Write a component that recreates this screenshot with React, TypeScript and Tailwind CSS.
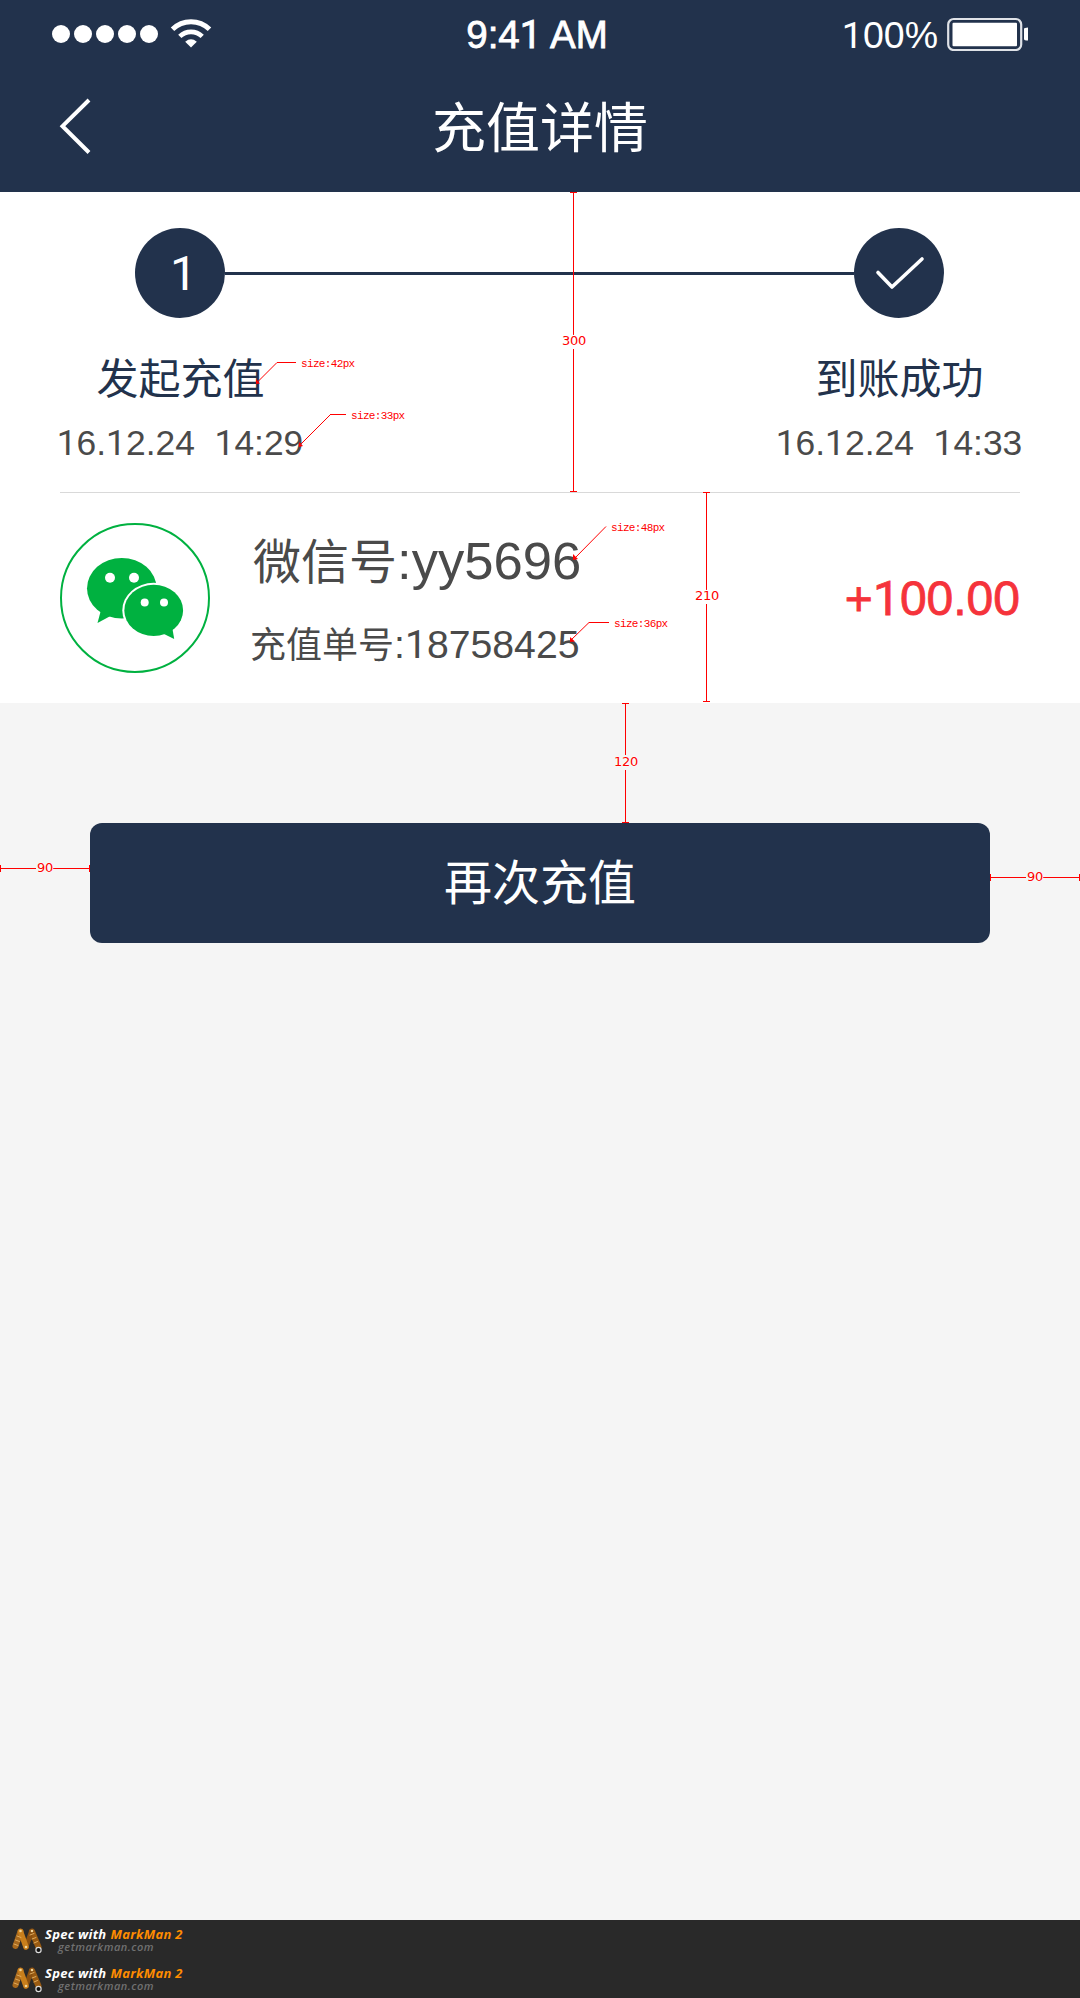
import React from "react";

const CJK = "font-['Liberation_Sans','Noto_Sans_CJK_SC',sans-serif]";

// Figures with a footless "1".
function Figures({ value }: { value: string }) {
  return (
    <>
      {value.split(/(1)/).map((part, i) =>
        part === "1" ? (
          <span key={i} className="font-['Roboto',sans-serif] leading-[0]">1</span>
        ) : (
          part
        )
      )}
    </>
  );
}

function StatusBar() {
  return (
    <div className="flex h-[68px] items-center justify-between pl-[52px] pr-[52px] text-white">
      <div className="flex flex-1 items-center">
        <div className="flex gap-[4.3px]">
          {[0, 1, 2, 3, 4].map((i) => (
            <span key={i} className="size-[17.8px] rounded-full bg-white" />
          ))}
        </div>
        <svg className="ml-[12px]" width="42" height="30" viewBox="0 0 42 30" fill="none">
          <path d="M2.5 10.2 A26.5 26.5 0 0 1 39.5 10.2" stroke="#fff" strokeWidth="5" />
          <path d="M9.8 17.4 A16 16 0 0 1 32.2 17.4" stroke="#fff" strokeWidth="4.6" />
          <path d="M15.2 22.7 Q21 18 26.8 22.7 L21 28.6 Z" fill="#fff" />
        </svg>
      </div>
      <div className="relative -left-[3px] top-px text-[38.5px] leading-[38px] [-webkit-text-stroke:0.8px_white]">
        <Figures value="9:41 AM" />
      </div>
      <div className="flex flex-1 items-center justify-end">
        <span className="relative -left-px top-px text-[37.5px] leading-[38px]">
          <Figures value="100%" />
        </span>
        <svg className="ml-[7px]" width="82" height="34" viewBox="0 0 82 34">
          <rect x="2.2" y="2" width="73" height="31" rx="5.5" fill="none" stroke="#dfe2e7" strokeWidth="2.2" />
          <rect x="6.5" y="5.7" width="64.500" height="23.6" rx="1" fill="#fff" />
          <path d="M78 12 q0-1.5 4-1.5 v13 q-4 0-4-1.5z" fill="#fff" />
        </svg>
      </div>
    </div>
  );
}

function Header() {
  return (
    <header className="h-[192px] bg-[#22324c]">
      <StatusBar />
      <div className="grid h-[118px] grid-cols-[1fr_auto_1fr] items-center px-[58px] text-white">
        <svg className="mb-[2px]" width="34" height="60" viewBox="0 0 34 60" fill="none">
          <path d="M31 4 L4.5 30.2 L31 56.5" stroke="#fff" strokeWidth="4" />
        </svg>
        <h1 className="mt-[3px] text-[54px] leading-[60px] font-normal">充值详情</h1>
      </div>
    </header>
  );
}

function Step({ label, date, children }: { label: string; date: string; children: React.ReactNode }) {
  return (
    <div className="flex w-[250px] flex-col items-center">
      <div className="flex size-[90px] items-center justify-center rounded-full bg-[#22324c] text-[48px] text-white">
        {children}
      </div>
      <div className="ml-px mt-[37px] h-[50px] text-[42px] leading-[50px] text-[#22324c]">{label}</div>
      <div className="mt-[18px] h-[40px] text-[35.4px] leading-[40px] whitespace-pre text-[#4a4a4a]">
        <Figures value={date} />
      </div>
    </div>
  );
}

function Steps() {
  return (
    <section className="flex h-[300px] justify-between pl-[55px] pr-[56px] pt-[36px]">
      <Step label="发起充值" date="16.12.24  14:29">
        <span className="pl-[7px] pt-[2px]">
          <Figures value="1" />
        </span>
      </Step>
      <div className="-mx-[80px] mt-[44px] h-[3px] flex-1 bg-[#22324c]" />
      <Step label="到账成功" date="16.12.24  14:33">
        <svg width="90" height="90" viewBox="0 0 90 90" fill="none">
          <path d="M24 44.5 L38 59 L68 31" stroke="#fff" strokeWidth="3.6" strokeLinecap="round" strokeLinejoin="round" />
        </svg>
      </Step>
    </section>
  );
}

function WechatLogo() {
  return (
    <svg className="shrink-0" width="150" height="150" viewBox="0 0 150 150">
      <circle cx="75" cy="75" r="74" fill="#fff" stroke="#00b140" strokeWidth="2" />
      <ellipse cx="61.8" cy="65.3" rx="34.8" ry="30.3" fill="#00b140" />
      <path d="M41 87 L37.5 100 L50 93.3 Z" fill="#00b140" />
      <circle cx="50" cy="54.8" r="5" fill="#fff" />
      <circle cx="74" cy="54.8" r="5" fill="#fff" />
      <ellipse cx="93.7" cy="87.4" rx="31.4" ry="27.6" fill="#fff" />
      <ellipse cx="93.7" cy="87.4" rx="29.4" ry="25.6" fill="#00b140" />
      <path d="M112.5 106 L114.2 116 L104 111 Z" fill="#00b140" />
      <circle cx="84.7" cy="79.4" r="4" fill="#fff" />
      <circle cx="104" cy="79.4" r="4" fill="#fff" />
    </svg>
  );
}

function Record() {
  return (
    <section className="mx-[60px] flex h-[211px] items-center border-t border-[#d9d9d9] text-[#4a4a4a]">
      <WechatLogo />
      <div className="ml-[40px] flex flex-col">
        <div className="ml-[3px] flex h-[60px] items-baseline text-[48px] leading-[60px]">
          微信号<span className="text-[52.6px]">:yy5696</span>
        </div>
        <div className="mt-[31px] flex h-[43px] items-baseline text-[36px] leading-[46px]">
          充值单号
          <span className="text-[39.2px]">
            <Figures value=":18758425" />
          </span>
        </div>
      </div>
      <div className="ml-auto mt-[2px] text-[48px] leading-[54px] text-[#f5333b] [-webkit-text-stroke:0.8px_#f5333b]">
        <Figures value="+100.00" />
      </div>
    </section>
  );
}

const lengths = [
  { text: "300", pos: "left-[562px] top-[333px]" },
  { text: "210", pos: "left-[695px] top-[588px]" },
  { text: "120", pos: "left-[614px] top-[754px]" },
  { text: "90", pos: "left-[37px] top-[860px]" },
  { text: "90", pos: "left-[1027px] top-[869px]" },
];

const sizes = [
  { text: "size:42px", pos: "left-[301px] top-[357px]" },
  { text: "size:33px", pos: "left-[351px] top-[409px]" },
  { text: "size:48px", pos: "left-[611px] top-[521px]" },
  { text: "size:36px", pos: "left-[614px] top-[617px]" },
];

function Annotations() {
  return (
    <div className="pointer-events-none absolute inset-0 text-[#ff0000]">
      <svg className="absolute inset-0" width="1080" height="1998" viewBox="0 0 1080 1998" fill="none" stroke="#ff0000">
        <g shapeRendering="crispEdges">
          <path d="M570 192.5h7M573.5 192v143M573.5 349v143M570 491.5h7" />
          <path d="M703 492.5h7M706.5 492v98M706.5 604v98M703 701.5h7" />
          <path d="M622 703.5h7M625.5 703v52M625.5 770v53M622 822.5h7" />
          <path d="M0.5 865v7M0 868.5h36M53 868.5h37M89.5 865v7" />
          <path d="M990.5 874v7M990 877.5h36M1043 877.5h37M1079.5 874v7" />
          <path d="M277 362.5h19M330 414.5h16M589 622.5h20" />
        </g>
        <path d="M257 382.5L277 362.5M300 445L330.500 414.5M574 559L606 526.500M570 641L589 622.5" />
        <g fill="#ff0000" stroke="none">
          <path d="M256 384v-5l4 4.500zM299 447v-5l4 4zM573 560v-6l5 5zM570 642v-5l5 4.500z" />
        </g>
      </svg>
      {lengths.map((l) => (
        <span
          key={l.pos}
          className={"absolute font-['DejaVu_Sans',sans-serif] text-[13px] leading-[15px] tracking-[-0.3px] [text-shadow:0_0_2px_white,0_0_2px_white] " + l.pos}
        >
          {l.text}
        </span>
      ))}
      {sizes.map((s) => (
        <span
          key={s.text}
          className={"absolute font-['Liberation_Mono',monospace] text-[11px] leading-[14px] tracking-[-0.65px] " + s.pos}
        >
          {s.text}
        </span>
      ))}
    </div>
  );
}

function MarkmanBadge() {
  return (
    <div className="flex h-[39px] items-start pl-[11px] pt-[7px]">
      <svg width="33" height="28" viewBox="0 0 33 28" fill="none" strokeLinecap="round">
        <path d="M4.500 19 L9.500 4.500" stroke="#a8691d" strokeWidth="6" />
        <path d="M21 4.500 L27.500 20" stroke="#9a5b12" strokeWidth="6" />
        <path d="M15 20 L20.500 4.500" stroke="#8a5010" strokeWidth="5" />
        <path d="M9.500 4.500 L15 20" stroke="#c87f1c" strokeWidth="5.500" />
        <path d="M3 17l4 1.500M4.500 13l4 1.500M6 9l4 1.500M19 8l4-1.500M21 12l4-1.500M23 16l3.500-1.500" stroke="#e0ab5c" strokeWidth="1" />
        <circle cx="9.500" cy="4" r="1.300" fill="#f5d79a" />
        <circle cx="21" cy="4" r="1.300" fill="#f5d79a" />
        <circle cx="15" cy="20" r="1.300" fill="#f5d79a" />
        <circle cx="27.500" cy="23" r="3.200" fill="#ddd" />
        <circle cx="27.500" cy="23" r="2" fill="#111" />
      </svg>
      <div className="ml-[1px] mt-px flex flex-col font-['Open_Sans',sans-serif] italic">
        <span className="flex h-[12px] items-center gap-[4px] text-[13px] leading-[12px] font-bold tracking-[0.3px] text-white">
          <span>Spec with</span>
          <span className="text-[#ff8c00]">MarkMan 2</span>
        </span>
        <span className="ml-[13px] mt-px h-[12px] text-[11px] leading-[12px] font-semibold tracking-[0.5px] text-[#707070]">getmarkman.com</span>
      </div>
    </div>
  );
}

export default function App() {
  return (
    <div className={"relative flex h-[1998px] w-[1080px] flex-col overflow-hidden bg-[#f5f5f5] " + CJK}>
      <Header />
      <main className="flex flex-1 flex-col">
        <div className="bg-white">
          <Steps />
          <Record />
        </div>
        <button className="mx-[90px] mt-[120px] h-[120px] rounded-[12px] bg-[#22324c] pt-[2px] text-[48px] text-white">再次充值</button>
      </main>
      <footer className="h-[78px] bg-[#292929]">
        <MarkmanBadge />
        <MarkmanBadge />
      </footer>
      <Annotations />
    </div>
  );
}
